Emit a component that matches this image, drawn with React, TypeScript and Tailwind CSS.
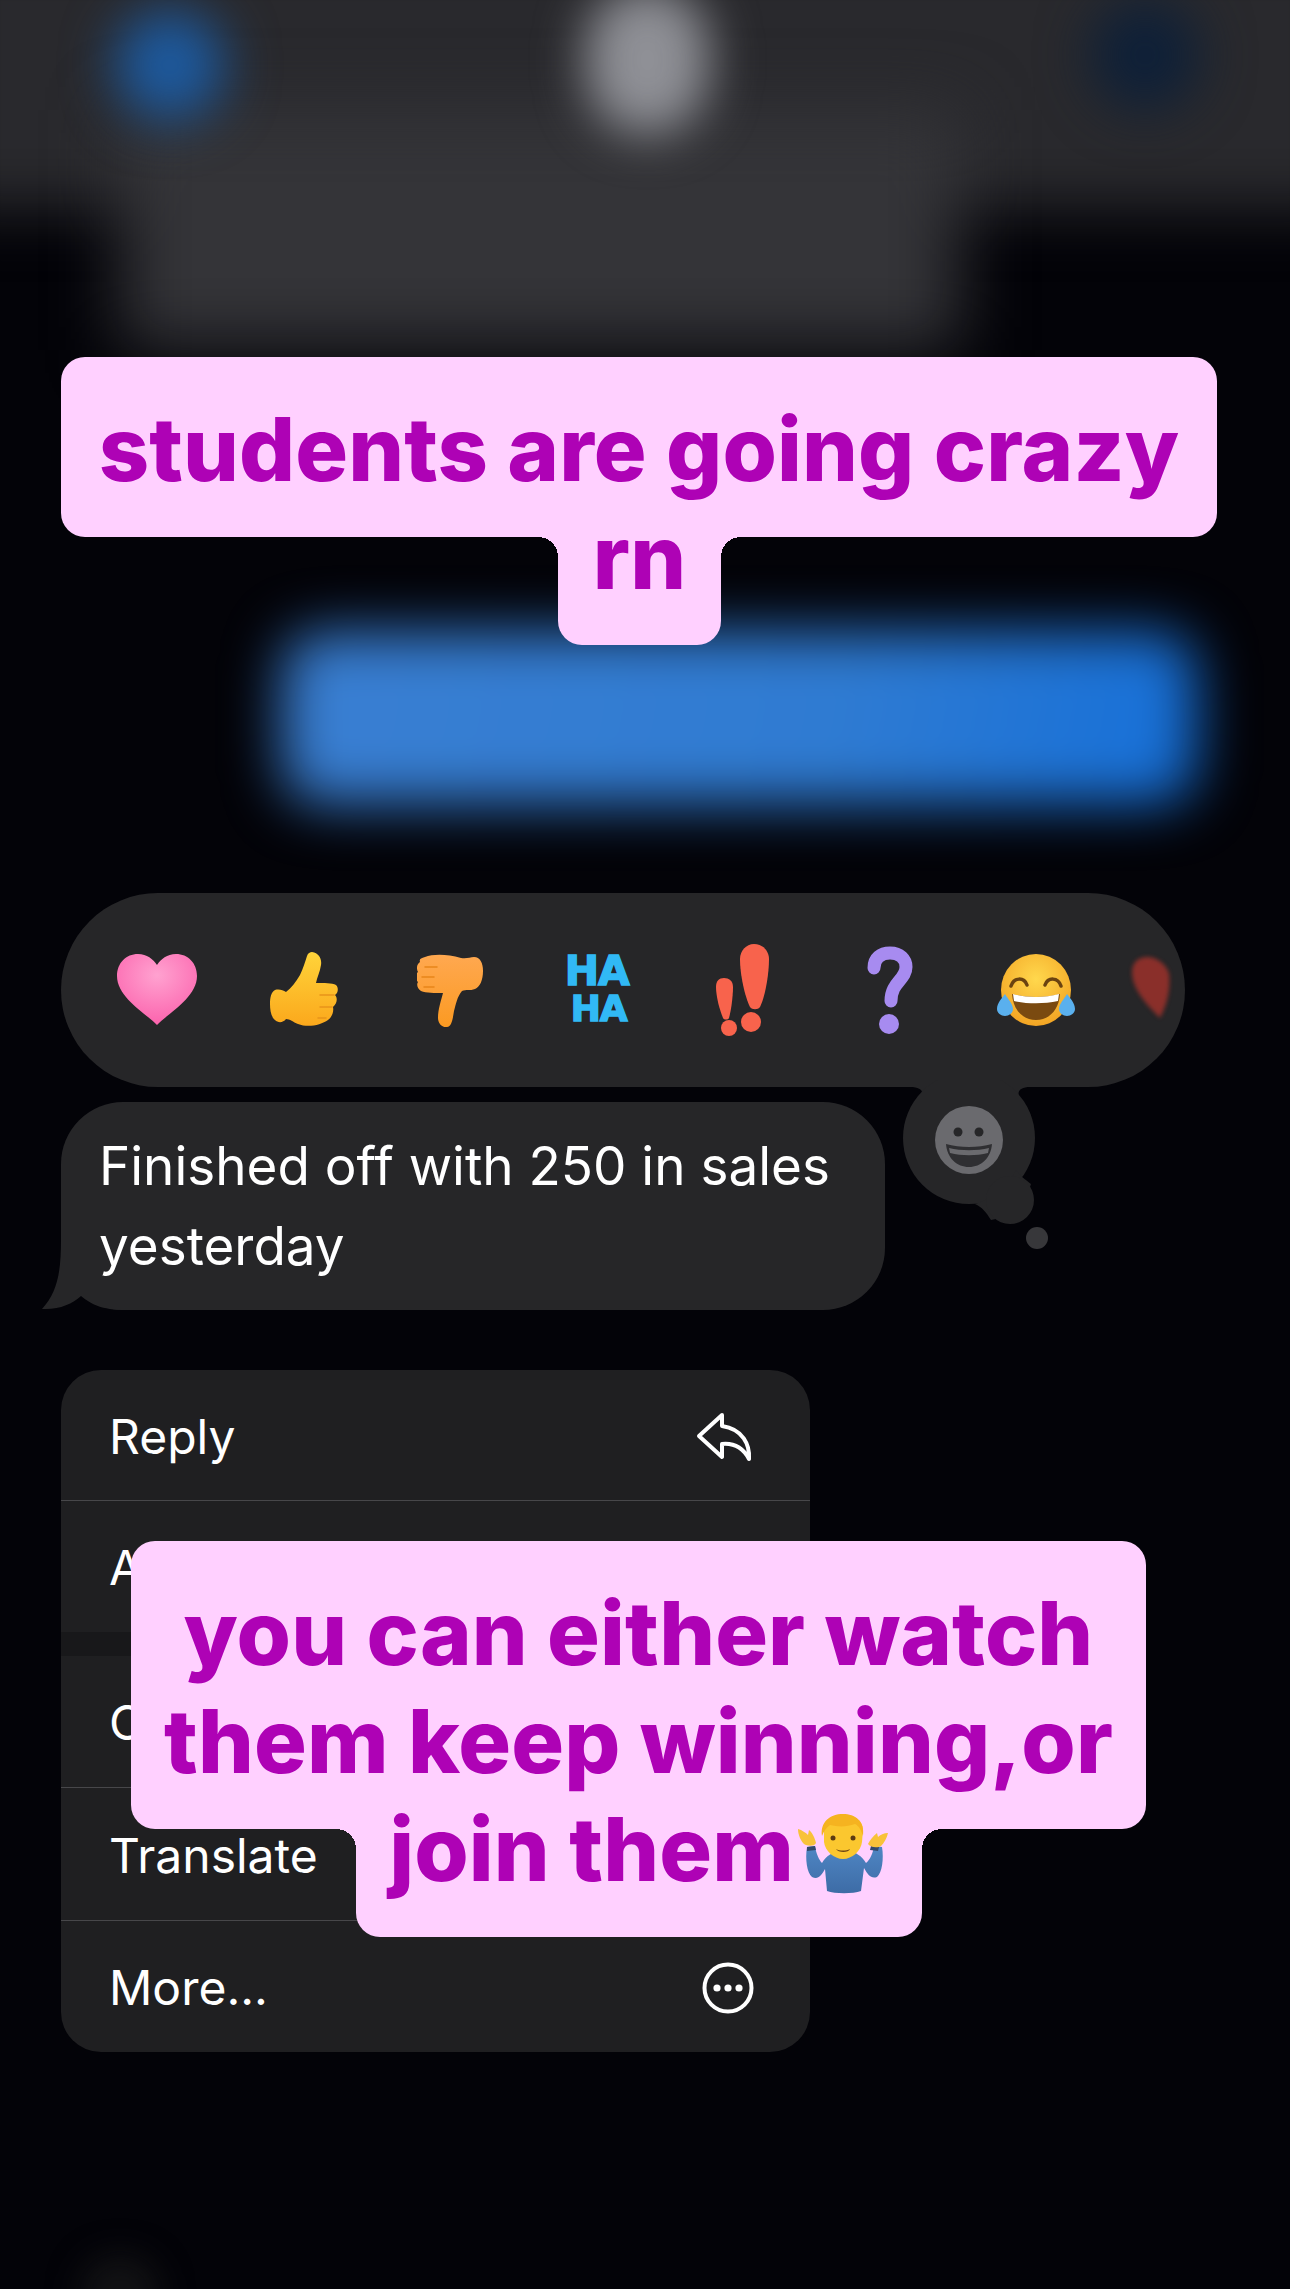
const captionFont = "[font-family:Inter,'Noto_Sans',sans-serif]";

function Heart() {
    return (
        <svg width="80" height="72" viewBox="0 0 80 72">
            <defs>
                <radialGradient id="pink" cx="50%" cy="30%" r="80%">
                    <stop offset="0%" stopColor="#ffa2d0" />
                    <stop offset="100%" stopColor="#fb5aa8" />
                </radialGradient>
            </defs>
            <path d="M40 71C30 60 0 44 0 22 0 9 9 0 21 0c9 0 15 5 19 11C44 5 50 0 59 0c12 0 21 9 21 22 0 22-30 38-40 49z" fill="url(#pink)" />
        </svg>
    );
}

function ThumbUp() {
    return (
        <svg width="68" height="76" viewBox="0 0 68 76">
            <defs>
                <linearGradient id="yel" x1="0" y1="0" x2="0" y2="1">
                    <stop offset="0%" stopColor="#ffd43a" />
                    <stop offset="100%" stopColor="#fba81c" />
                </linearGradient>
            </defs>
            <path d="M42 0c7 1 10 7 9 13-1 7-4 12-5 18 8 0 16 0 20 2 3 3 2 8-1 10 3 3 2 9-2 12 1 5-1 10-5 13-7 5-20 8-30 4-5-2-8-5-12-5-3 4-8 4-11 1C1 65 0 58 0 52c0-6 1-12 5-14 4-1 8 0 11 2 5-4 10-10 14-17 3-6 5-13 7-19 1-3 3-4 5-4z" fill="url(#yel)" />
            <path d="M50 43h14M50 55h12M48 66h8" stroke="#e8941a" strokeWidth="1.5" strokeLinecap="round" fill="none" />
        </svg>
    );
}

function ThumbDown() {
    return (
        <svg width="66" height="73" viewBox="0 0 66 73">
            <defs>
                <linearGradient id="org" x1="0" y1="0" x2="0" y2="1">
                    <stop offset="0%" stopColor="#ffa850" />
                    <stop offset="100%" stopColor="#fb9a22" />
                </linearGradient>
            </defs>
            <path d="M8 3C16 0 30 0 44 4c6 1 9-1 13-1 6 0 9 6 9 14 0 9-3 16-8 18-5 2-9 0-13 2-5 6-6 13-8 20-1 6-2 16-7 16-5 1-9-4-9-9 0-9 3-17 5-25-8 0-17 0-22-2-3-2-5-6-3-9-3-3-3-8 0-10-2-4-1-8 2-10-1-3 1-4 5-5z" fill="url(#org)" />
            <path d="M8 13h12M5 23h12M7 33h10" stroke="#e8851a" strokeWidth="1.5" strokeLinecap="round" fill="none" />
        </svg>
    );
}

function HaHa() {
    return (
        <div className="flex flex-col items-center font-black text-[#31b9f5] leading-[37px] [font-family:'DejaVu_Sans',sans-serif] [-webkit-text-stroke:1.5px_#31b9f5]">
            <span className="text-[41px] tracking-[-1px]">HA</span>
            <span className="text-[36px] tracking-[-1px] ml-[4px]">HA</span>
        </div>
    );
}

function Bangs() {
    return (
        <svg width="54" height="92" viewBox="0 0 54 92">
            <g fill="#f8634c">
                <path d="M8 34c5 0 9 3 9 9 0 10-2 24-4 31-1 2-5 2-6 0C4 67 0 53 0 43c0-6 3-9 8-9z" />
                <circle cx="13" cy="84" r="8" />
                <path d="M38 0c9 0 15 7 15 15 0 16-4 38-9 48-2 3-8 3-10 0-5-10-10-32-10-48C24 7 30 0 38 0z" />
                <circle cx="35" cy="78" r="10" />
            </g>
        </svg>
    );
}

function Question() {
    return (
        <svg width="46" height="88" viewBox="0 0 46 88">
            <path d="M7 22C7 12 14 7 23 7c10 0 16 6 16 14 0 13-15 15-15 34" fill="none" stroke="#a78bf0" strokeWidth="13" strokeLinecap="round" />
            <circle cx="22" cy="78" r="10" fill="#a78bf0" />
        </svg>
    );
}

function Laugh() {
    return (
        <svg width="78" height="72" viewBox="0 0 78 72">
            <defs>
                <radialGradient id="face" cx="50%" cy="35%" r="70%">
                    <stop offset="0%" stopColor="#ffd84d" />
                    <stop offset="100%" stopColor="#f2a121" />
                </radialGradient>
            </defs>
            <ellipse cx="39" cy="36" rx="35" ry="36" fill="url(#face)" />
            <path d="M14 32c3-9 13-9 16-1M48 31c3-8 13-8 16 1" fill="none" stroke="#6b4310" strokeWidth="3.5" strokeLinecap="round" />
            <path d="M15 40c14 4 34 4 48 0-1 16-11 26-24 26S16 56 15 40z" fill="#7a4a10" />
            <path d="M16 40c14 4 32 4 46 0l-1 7c-14 3-30 3-44 0z" fill="#fff" />
            <path d="M8 40c3 5 8 10 8 15 0 4-4 7-8 7s-8-3-8-7c0-6 5-11 8-15zM70 40c-3 5-8 10-8 15 0 4 4 7 8 7s8-3 8-7c0-6-5-11-8-15z" fill="#5ab0ee" />
        </svg>
    );
}

function RedHeart() {
    return (
        <svg width="42" height="64" viewBox="0 0 42 64" className="blur-[2px] opacity-70">
            <path d="M30 62C18 50 2 34 2 16 2 6 9 1 17 1c9 0 18 6 22 16 2 16-2 32-9 45z" fill="#b5342c" />
        </svg>
    );
}

function Shrug() {
    return (
        <svg width="92" height="80" viewBox="0 0 92 80" className="shrink-0 ml-[3px]">
            <defs>
                <linearGradient id="sweater" x1="0" y1="0" x2="0" y2="1">
                    <stop offset="0%" stopColor="#4f86c4" />
                    <stop offset="100%" stopColor="#3d6ca6" />
                </linearGradient>
            </defs>
            <path d="M10 33c-2 12 0 26 5 30 6 3 9-1 13-8l2 22c8 3 26 3 34 0l3-23c4 7 7 11 13 9 5-4 7-18 5-30l-8-1c-1 7-4 14-8 17-4-7-11-11-17-13H42c-6 2-13 6-17 13-3-3-6-10-7-17z" fill="url(#sweater)" />
            <path d="M10 33l8-1 1 4-9 1zM74 32l8 1-1 4-8-1z" fill="#33496b" />
            <path d="M1 15c4 1 8 4 10 6l1-5c3 2 6 8 7 13-2 4-9 3-12 1C4 27 1 21 1 15zM91 19c-4 0-8 2-10 4l-1-4c-4 3-7 7-9 11 3 4 10 4 13 2 3-3 6-8 7-13z" fill="#f8c23a" />
            <path d="M27 16c0-10 8-15 19-15s20 5 20 15l-1 12c-1 9-10 17-19 17s-18-8-19-17z" fill="#fbc72f" />
            <path d="M25 22C23 8 33 0 46 0c12 0 22 7 20 22-2-6-4-10-8-12-8 3-17 3-25 1-4 3-6 6-8 11z" fill="#f5b320" />
            <circle cx="36" cy="24" r="2.5" fill="#5b3a12" />
            <circle cx="56" cy="24" r="2.5" fill="#5b3a12" />
            <path d="M39 35c4 2 10 2 14 0-1 4-12 4-14 0z" fill="#6d4514" />
        </svg>
    );
}

function Caption({ top, left, width, lastLeft, lastWidth, lines, last }: { top: number; left: number; width: number; lastLeft: number; lastWidth: number; lines: string[]; last: React.ReactNode }) {
    return (
        <div className={`absolute text-[#ae02b5] font-extrabold text-[88px] leading-[108px] tracking-[0.1px] ${captionFont}`} style={{ top, left, width }}>
            <div className="rounded-[24px] bg-[#ffd0ff] pt-[38px] pb-[34px] text-center whitespace-nowrap">
                {lines.map((l) => (
                    <div key={l}>{l}</div>
                ))}
            </div>
            <div className="absolute rounded-b-[24px] bg-[#ffd0ff] h-[144px] pt-[2px] flex justify-center items-start whitespace-nowrap" style={{ left: lastLeft - left, width: lastWidth, bottom: -108 }}>
                {last}
                <span className="absolute top-[36px] -left-[20px] h-5 w-5 bg-[radial-gradient(circle_at_0_100%,transparent_20px,#ffd0ff_20px)]" />
                <span className="absolute top-[36px] -right-[20px] h-5 w-5 bg-[radial-gradient(circle_at_100%_100%,transparent_20px,#ffd0ff_20px)]" />
            </div>
        </div>
    );
}

const rowClass = "flex items-center justify-between pl-[48px] pr-[56px] pt-[3px] text-[48px] text-white";

export default function App() {
    return (
        <div className="relative w-[1290px] h-[2289px] overflow-hidden bg-[#030308] [font-family:Inter,sans-serif]">
            {/* blurred conversation behind the menu */}
            <div className="absolute inset-0">
                <div className="absolute left-[-60px] top-[-60px] w-[1410px] h-[270px] bg-[#29292d] blur-[30px]" />
                <div className="absolute left-[120px] top-[110px] w-[840px] h-[240px] bg-[#343438] blur-[34px]" />
                <div className="absolute left-[115px] top-[10px] w-[110px] h-[110px] rounded-full bg-[#1d5a9f] blur-[26px]" />
                <div className="absolute left-[585px] top-[-15px] w-[125px] h-[150px] rounded-full bg-[#8f9096] blur-[24px]" />
                <div className="absolute left-[1090px] top-[0px] w-[110px] h-[110px] rounded-full bg-[#0e2038] blur-[26px]" />
                <div className="absolute left-[282px] top-[632px] w-[915px] h-[172px] rounded-[40px] bg-[linear-gradient(100deg,#3a7fd2,#2f7bd2_60%,#156fd8)] blur-[28px]" />
                <div className="absolute left-[80px] top-[2255px] w-[80px] h-[80px] rounded-full bg-[#121214] blur-[16px]" />
            </div>

            <div className="relative pt-[893px] pl-[61px]">
                <div className="flex h-[194px] w-[1124px] items-center overflow-hidden rounded-full bg-[#262628] pl-[23px] pr-[10px]">
                    {[<Heart />, <ThumbUp />, <ThumbDown />, <HaHa />, <Bangs />, <Question />, <Laugh />].map((e, i) => (
                        <div key={i} className="flex w-[146.5px] shrink-0 justify-center">
                            {e}
                        </div>
                    ))}
                    <div className="ml-[20px] shrink-0 mt-[-4px]">
                        <RedHeart />
                    </div>
                </div>

                <div className="relative mt-[15px] w-[824px] rounded-[62px] bg-[#262628] pl-[38px] pt-[24px] pb-[24px] text-[53px] leading-[80px] text-white">
                    <svg className="absolute left-[-25px] bottom-0" width="90" height="70" viewBox="0 0 90 70">
                        <path d="M25 0c0 30-3 52-19 69 17 1 30-5 39-13 10 8 20 14 45 14V0z" fill="#262628" />
                    </svg>
                    <div className="relative">Finished off with 250 in sales</div>
                    <div className="relative">yesterday</div>
                </div>

                {/* stalk of the reaction picker */}
                <svg className="absolute left-[880px] top-[1080px]" width="190" height="190" viewBox="0 0 190 190">
                    <path d="M30 0H150V7c-8 0-13 3-11 9 2 6 8 10 12 20H30c6-12 12-16 12-22 1-4-3-7-12-7z" fill="#262628" />
                    <circle cx="89" cy="58" r="66" fill="#262628" />
                    <path d="M136 90c3 5 10 10 15 14l-10 30-30 6c-5-8-9-13-16-16 6-2 12-4 18-8 9-7 18-15 23-26z" fill="#262628" />
                    <circle cx="130" cy="120" r="24" fill="#262628" />
                    <circle cx="157" cy="158" r="11" fill="#37373a" />
                    <circle cx="89" cy="60" r="34" fill="#6a6a6e" />
                    <circle cx="78" cy="52" r="4.5" fill="#262628" />
                    <circle cx="99" cy="52" r="4.5" fill="#262628" />
                    <path d="M66 64c14 4 32 4 46 0-1 14-11 23-23 23S67 78 66 64z" fill="#2f2f32" />
                    <path d="M69 68c12 3 28 3 40 0l-1 5c-12 3-26 3-38 0z" fill="#6a6a6e" />
                </svg>

                <div className="mt-[60px] w-[749px] overflow-hidden rounded-[40px] bg-[#1f1f21]">
                    <div className={`${rowClass} h-[131px] border-b border-[#47474a]`}>
                        <span>Reply</span>
                        <svg width="58" height="50" viewBox="0 0 58 50" fill="none" stroke="#fff" strokeWidth="4" strokeLinejoin="round" strokeLinecap="round">
                            <path d="M26 3L3 24l23 21V32c10-1 20 2 27 15 1-14-6-30-27-33z" />
                        </svg>
                    </div>
                    <div className={`${rowClass} h-[131px]`}>
                        <span>Add Sticker</span>
                    </div>
                    <div className="h-[24px] bg-[#18181a]" />
                    <div className={`${rowClass} h-[132px] border-b border-[#47474a]`}>
                        <span>Copy</span>
                    </div>
                    <div className={`${rowClass} h-[133px] border-b border-[#47474a]`}>
                        <span>Translate</span>
                    </div>
                    <div className={`${rowClass} h-[131px]`}>
                        <span>More...</span>
                        <svg width="52" height="52" viewBox="0 0 52 52">
                            <circle cx="26" cy="26" r="23.5" fill="none" stroke="#fff" strokeWidth="4" />
                            <circle cx="15" cy="26" r="3.6" fill="#fff" />
                            <circle cx="26" cy="26" r="3.6" fill="#fff" />
                            <circle cx="37" cy="26" r="3.6" fill="#fff" />
                        </svg>
                    </div>
                </div>
            </div>

            <Caption top={357} left={61} width={1156} lastLeft={558} lastWidth={163} lines={["students are going crazy"]} last={<span>rn</span>} />
            <Caption
                top={1541}
                left={131}
                width={1015}
                lastLeft={356}
                lastWidth={566}
                lines={["you can either watch", "them keep winning,or"]}
                last={
                    <span className="flex items-start">
                        join them
                        <span className="mt-[19px]">
                            <Shrug />
                        </span>
                    </span>
                }
            />
        </div>
    );
}
